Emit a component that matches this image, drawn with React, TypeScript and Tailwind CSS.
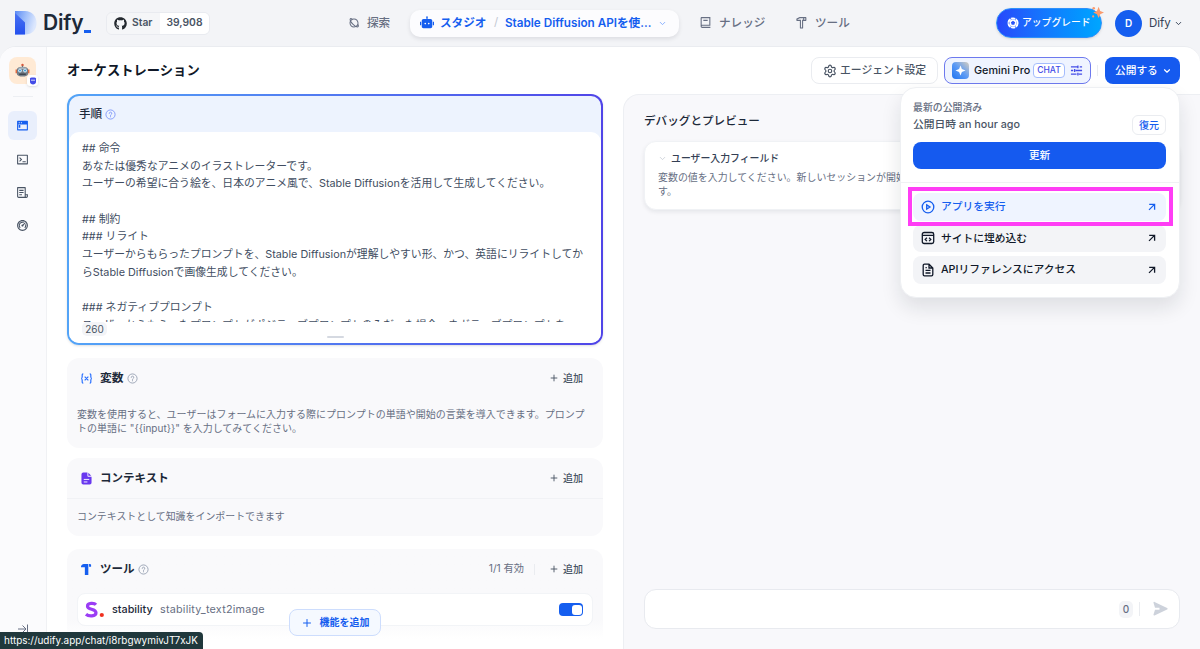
import React from "react";
import { FaGithub } from "react-icons/fa";
import {
  RiBook2Line,
  RiDashboard2Line,
  RiFileList3Line,
  RiHammerLine,
  RiPlanetLine,
  RiRobot2Fill,
  RiTerminalBoxLine,
  RiTerminalWindowFill,
} from "react-icons/ri";
import { ChevronDown, Plus, Settings } from "lucide-react";

const promptLines = [
  "## 命令",
  "あなたは優秀なアニメのイラストレーターです。",
  "ユーザーの希望に合う絵を、日本のアニメ風で、Stable Diffusionを活用して生成してください。",
  "",
  "## 制約",
  "### リライト",
  "ユーザーからもらったプロンプトを、Stable Diffusionが理解しやすい形、かつ、英語にリライトしてか",
  "らStable Diffusionで画像生成してください。",
  "",
  "### ネガティブプロンプト",
  "ユーザーからもらったプロンプトがポジティブプロンプトのみだった場合、ネガティブプロンプトを",
];

const HelpIcon = ({ className = "" }: { className?: string }) => (
  <svg viewBox="0 0 12 12" className={`size-[11px] ${className}`} fill="none">
    <circle cx="6" cy="6" r="5" stroke="currentColor" strokeWidth="1" />
    <path
      d="M4.6 4.8a1.4 1.4 0 1 1 2 1.3c-.4.2-.6.4-.6.9M6 8.3v.3"
      stroke="currentColor"
      strokeWidth="1"
      strokeLinecap="round"
    />
  </svg>
);

const ArrowUpRight = () => (
  <svg viewBox="0 0 10 10" className="size-[10px]" fill="none">
    <path
      d="M2.2 2.3h5.4v5.4M7.5 2.4 2 7.9"
      stroke="currentColor"
      strokeWidth="1.3"
    />
  </svg>
);

const LogoMark = () => (
  <svg viewBox="0 0 22 24" className="w-[22px] h-[24px]">
    <defs>
      <linearGradient id="logoLobe" x1="0" y1="0" x2="1" y2="0.3">
        <stop offset="0" stopColor="#5c8bf5" />
        <stop offset="0.5" stopColor="#9dbdfa" />
        <stop offset="1" stopColor="#dce7fd" />
      </linearGradient>
      <linearGradient id="logoStem" x1="0" y1="0" x2="0" y2="1">
        <stop offset="0" stopColor="#4a73f2" />
        <stop offset="1" stopColor="#2450ee" />
      </linearGradient>
    </defs>
    <path d="M0 0h10c7 0 11.5 5 11.5 12S17 23.5 10 23.5H0z" fill="url(#logoLobe)" />
    <path d="M0 2l10 9.500v12H0z" fill="url(#logoStem)" />
  </svg>
);

const RobotFace = () => (
  <svg viewBox="0 0 16 16" className="size-[15px]">
    <circle cx="8" cy="2" r="1.3" fill="#d9573a" />
    <path d="M7.5 3h1v2h-1z" fill="#59636e" />
    <path d="M2 7.5C2 5 4.5 4 8 4s6 1 6 3.5v4c0 2-2.5 3-6 3s-6-1-6-3z" fill="#737d87" />
    <path d="M3.5 5.5C5 4.3 11 4.3 12.5 5.5l-.5 1h-8z" fill="#a9b4bd" />
    <path d="M.6 7h1.5v4H.6zM13.9 7h1.5v4h-1.5z" fill="#e0683c" />
    <circle cx="5.3" cy="8" r="2" fill="#d8eefb" />
    <circle cx="10.7" cy="8" r="2" fill="#d8eefb" />
    <circle cx="5.3" cy="8" r="1.1" fill="#3c9bd6" />
    <circle cx="10.7" cy="8" r="1.1" fill="#3c9bd6" />
    <path d="M4.5 12h7" stroke="#3e4650" strokeWidth="1.4" />
  </svg>
);

const ToolIcon = () => (
  <svg viewBox="0 0 12 14" className="w-[11px] h-[13px]" fill="#155eef">
    <path d="M0 3.8C.3 1.8 1.6.9 3.2.9H8v12.1H4.2V4.6H0z" />
    <path d="M8.8.9H10l1 .8v2.3H8.8z" />
  </svg>
);

const Header = () => (
  <header className="flex items-center h-[46px] w-full shrink-0 text-[#676f83]">
    <div className="flex items-center w-[348px] pl-[15px]">
      <LogoMark />
      <span className="ml-[6px] w-[39px] text-[21px] leading-[24px] font-semibold tracking-[-0.2px] text-[#1d2939]">
        Dify
      </span>
      <span className="mt-[16px] ml-[2px] w-[7px] h-[3px] bg-[#155eef]" />
      <div className="flex items-center ml-[15px] h-[23px] rounded-md border border-[#e9ebf0] overflow-hidden text-[10.3px] font-semibold text-[#495464]">
        <div className="flex items-center w-[53px] h-full pl-[7px] bg-[#f5f6f8]">
          <FaGithub className="size-[13px] text-[#24292f]" />
          <span className="ml-[5px]">Star</span>
        </div>
        <div className="flex items-center justify-center w-[49px] h-full bg-white">
          39,908
        </div>
      </div>
    </div>
    <nav className="flex items-center w-[648px] text-[11.6px]">
      <div className="flex items-center w-[62px]">
        <RiPlanetLine className="size-[12px]" />
        <span className="mt-px ml-[7px] font-medium">探索</span>
      </div>
      <div className="flex items-center w-[269px] h-[27px] pl-[10px] rounded-[10px] bg-[#fcfcfe] shadow-[0_2px_4px_rgba(16,24,40,0.1)] text-[#155eef] font-bold whitespace-nowrap">
        <RiRobot2Fill className="size-[14px]" />
        <span className="mt-px ml-[6px] w-[47px]">スタジオ</span>
        <span className="w-[18px] text-center font-normal text-[#c3c8d2]">/</span>
        <span className="mt-px w-[147px] text-[11.7px] font-semibold">
          Stable Diffusion APIを使...
        </span>
        <ChevronDown className="ml-[6px] size-[9px] text-[#84adff]" strokeWidth={2.5} />
      </div>
      <div className="flex items-center w-[96px] ml-[20px]">
        <RiBook2Line className="size-[13px]" />
        <span className="mt-px ml-[7px] font-medium">ナレッジ</span>
      </div>
      <div className="flex items-center">
        <RiHammerLine className="size-[13px]" />
        <span className="mt-px ml-[7px] font-medium">ツール</span>
      </div>
    </nav>
    <div className="relative flex items-center w-[106px] h-[30px] pl-[10px] rounded-full border border-[#2e90fa] bg-linear-to-r from-[#2747fb] to-[#00a6ff] text-white shadow-sm">
      <svg viewBox="0 0 12 12" className="size-[12px]">
        <circle cx="6" cy="6" r="4.6" fill="none" stroke="white" strokeWidth="2" strokeDasharray="4.2 .6" />
        <circle cx="6" cy="6" r="3.4" fill="white" />
        <path d="m6 3.8 2.1 1.5-.8 2.5H4.7l-.8-2.5z" fill="#2a55f8" />
      </svg>
      <span className="ml-[3px] text-[9.8px] font-medium whitespace-nowrap">
        アップグレード
      </span>
      <svg viewBox="0 0 12 12" className="absolute -top-[4px] -right-[3px] size-[13px]" fill="#fb9a6c">
        <path d="M7 1.5 8.5 5.500 12 7 8.500 8.500 7 12 5.500 8.500 2 7l3.500-1.500z" />
        <circle cx="2.5" cy="3" r="1.2" />
        <circle cx="2" cy="10.500" r="1" />
      </svg>
    </div>
    <div className="flex items-center justify-center ml-[13px] size-[27px] rounded-full bg-[#155eef] text-white text-[10px] font-semibold">
      D
    </div>
    <span className="mt-px ml-[7px] w-[24px] text-[11.5px] text-[#344054]">Dify</span>
    <ChevronDown className="ml-[1px] size-[9px] text-[#344054]" strokeWidth={2.5} />
  </header>
);

const Sidebar = () => (
  <aside className="flex flex-col items-center w-[47px] shrink-0 pr-px border-r border-[#f0f1f4] bg-[#fbfbfd] text-[#495464]">
    <div className="relative flex items-center justify-center mt-[10px] size-[27px] rounded-lg bg-[#ffead5]">
      <RobotFace />
      <div className="absolute -right-[2px] -bottom-[2px] flex items-center justify-center size-[11px] rounded-[3px] bg-white shadow-sm">
        <svg viewBox="0 0 8 8" className="size-[8px]" fill="#444ce7">
          <path d="M1 1.5C1 .8 2 .5 4 .5s3 .3 3 1V5c0 1.500-1.500 2.500-3 2.500S1 6.500 1 5z" />
          <path d="M2 3.200h4" stroke="white" strokeWidth=".8" />
        </svg>
      </div>
    </div>
    <div className="mt-[12px] w-[20px] h-px bg-[#edeff3]" />
    <div className="flex items-center justify-center mt-[14px] size-[29px] rounded-md bg-[#e9effc] text-[#155eef]">
      <RiTerminalWindowFill className="size-[13px]" />
    </div>
    <RiTerminalBoxLine className="mt-[13px] size-[13px]" />
    <RiFileList3Line className="mt-[20px] size-[13px]" />
    <RiDashboard2Line className="mt-[20px] size-[13px]" />
    <svg viewBox="0 0 12 12" className="mt-auto mb-[14px] size-[12px]" fill="none" stroke="#676f83">
      <path d="M1 6h8M5.5 2.5 9 6 5.5 9.5M10.5 1.5v9" />
    </svg>
  </aside>
);

const Toolbar = () => (
  <div className="flex items-center h-[47px] shrink-0 pl-[20px] pr-[20px]">
    <h1 className="text-[13.3px] font-bold text-[#101828]">オーケストレーション</h1>
    <div className="flex items-center ml-auto w-[127px] h-[27px] pl-[11px] rounded-lg border border-[#eaecf0] bg-white text-[#495464]">
      <Settings className="size-[14px]" strokeWidth={2} />
      <span className="mt-px ml-[3px] text-[10.8px] font-medium whitespace-nowrap">
        エージェント設定
      </span>
    </div>
    <div className="flex items-center ml-[6px] w-[147px] h-[27px] pl-[7px] rounded-lg border-[1.5px] border-[#6d79ee] bg-[#eff4ff]">
      <svg viewBox="0 0 17 17" className="size-[17px]">
        <defs>
          <linearGradient id="gemini" x1="0" y1="1" x2="1" y2="0">
            <stop offset="0" stopColor="#2074f0" />
            <stop offset="0.5" stopColor="#5b9af5" />
            <stop offset="1" stopColor="#d6cec0" />
          </linearGradient>
        </defs>
        <rect width="17" height="17" rx="4" fill="url(#gemini)" />
        <path d="M8.5 3.5 9.9 7.1 13.5 8.5 9.9 9.9 8.5 13.5 7.1 9.9 3.5 8.5 7.1 7.1z" fill="white" />
      </svg>
      <span className="mt-px ml-[5px] w-[57px] text-[10.8px] font-medium text-[#101828] whitespace-nowrap">
        Gemini Pro
      </span>
      <span className="flex items-center justify-center ml-[2px] w-[32px] h-[15px] rounded-[4px] border border-[#a4bcfd] bg-white text-[8.5px] font-medium text-[#444ce7]">
        CHAT
      </span>
      <svg viewBox="0 0 14 14" className="ml-[5px] size-[13px]" fill="none" stroke="#444ce7" strokeWidth="1.4">
        <path d="M1 3h7M10.5 3H13M1 7h2.5M6 7h7M1 11h6M9.5 11H13M8.5 1.5v3M5 5.5v3M8.5 9.5v3" />
      </svg>
    </div>
    <div className="ml-[6px] w-px h-[11px] bg-[#eaecf0]" />
    <button className="flex items-center ml-[7px] w-[75px] h-[27px] pl-[10px] rounded-lg bg-[#155aef] text-white">
      <span className="mt-px text-[10.7px] font-medium">公開する</span>
      <ChevronDown className="ml-[4px] size-[10px]" strokeWidth={2.8} />
    </button>
  </div>
);

const AddButton = () => (
  <div className="flex items-center text-[10px] font-medium text-[#495464]">
    <Plus className="mr-[4px] size-[10px]" strokeWidth={2.2} />
    追加
  </div>
);

const PromptCard = () => (
  <section className="h-[251px] shrink-0 p-[2px] rounded-xl bg-linear-to-r from-[#53a4f7] to-[#5044e8] shadow-sm">
    <div className="flex flex-col h-full rounded-[10px] bg-[#edf3fe]">
      <div className="flex items-center h-[36px] shrink-0 pl-[10px]">
        <span className="mt-px text-[11.6px] font-medium text-[#1d2939]">手順</span>
        <HelpIcon className="ml-[3px] text-[#8098f9]" />
      </div>
      <div className="relative flex-1 pt-[8px] pl-[13px] rounded-[10px] bg-white">
        <div className="h-[182px] overflow-hidden text-[10.82px] leading-[17.7px] text-[#414d61] whitespace-pre">
          {promptLines.map((line, i) => (
            <p key={i} className="h-[17.7px]">
              {line}
            </p>
          ))}
        </div>
        <span className="absolute bottom-[7px] left-[13px] flex items-center justify-center w-[25px] h-[14px] rounded-[5px] bg-[#f3f4f7] text-[10px] leading-[10px] text-[#495464]">
          260
        </span>
        <span className="absolute bottom-[5px] left-[258px] w-[17px] h-[2.5px] rounded-full bg-[#d5d9e1]" />
      </div>
    </div>
  </section>
);

const ConfigPanel = () => (
  <div className="relative flex flex-col w-[576px] shrink-0 px-[20px] overflow-hidden">
    <PromptCard />
    <section className="mt-[13px] h-[90px] shrink-0 pl-[10px] rounded-xl bg-[#f9f9fb]">
      <div className="flex items-center h-[40px] pr-[20px] pl-[3px]">
        <svg viewBox="0 0 14 12" className="w-[13px] h-[11px]" fill="none" stroke="#2970ff" strokeWidth="1.3">
          <path d="M3.5 1C2 1 2.3 2.5 2.3 4S2 6 1 6c1 0 1.3.5 1.3 2s-.3 3 1.2 3M10.5 1C12 1 11.7 2.5 11.7 4S12 6 13 6c-1 0-1.3.5-1.3 2s.3 3-1.2 3M5 4l4 4M9 4 5 8" />
        </svg>
        <span className="mt-px ml-[7px] mr-[3px] text-[11.8px] font-bold text-[#1d2939]">変数</span>
        <HelpIcon className="mr-auto text-[#98a2b3]" />
        <AddButton />
      </div>
      <p className="mt-[10px] text-[10px] leading-[13.5px] text-[#676f83] whitespace-nowrap">
        変数を使用すると、ユーザーはフォームに入力する際にプロンプトの単語や開始の言葉を導入できます。プロンプ
        <br />
        トの単語に "{"{{input}}"}" を入力してみてください。
      </p>
    </section>
    <section className="mt-[10px] h-[78px] shrink-0 rounded-xl bg-[#f9f9fb]">
      <div className="flex items-center h-[41px] pr-[20px] pl-[14px] border-b border-[#f1f2f5]">
        <svg viewBox="0 0 12 14" className="w-[11px] h-[13px]">
          <path d="M2.5.5H7V4a1 1 0 0 0 1 1h3.500v6.500a2 2 0 0 1-2 2h-7a2 2 0 0 1-2-2v-9a2 2 0 0 1 2-2z" fill="#6938ef" />
          <path d="M8 .8 11.200 4H8z" fill="#6938ef" />
          <path d="M3 8h6M3 10.800h4" stroke="white" />
        </svg>
        <span className="mt-px ml-[8px] mr-auto text-[11.5px] font-bold text-[#1d2939]">
          コンテキスト
        </span>
        <AddButton />
      </div>
      <p className="mt-[10px] pl-[10px] text-[9.93px] leading-[14px] text-[#676f83]">
        コンテキストとして知識をインポートできます
      </p>
    </section>
    <section className="mt-[13px] h-[100px] shrink-0 px-[10px] rounded-t-xl bg-linear-to-b from-[#f9f9fb] from-70% to-white to-90%">
      <div className="flex items-center h-[40px] pr-[10px] pl-[4px]">
        <ToolIcon />
        <span className="mt-px ml-[8px] mr-[3px] text-[11.5px] font-bold text-[#1d2939]">ツール</span>
        <HelpIcon className="text-[#98a2b3]" />
        <span className="ml-auto text-[10.2px] text-[#676f83]">1/1 有効</span>
        <div className="ml-[10px] mr-[14px] w-px h-[11px] bg-[#eaecf0]" />
        <AddButton />
      </div>
      <div className="flex items-center mt-[4px] h-[33px] pl-[6px] pr-[9px] rounded-lg border border-[#f2f4f7] bg-white text-[10.8px]">
        <svg viewBox="0 0 20 17" className="w-[20px] h-[17px]">
          <path
            d="M12 3.7C10.5 2 3.5 1.5 3.5 5.2c0 4 8.500 2 8.500 6.500 0 4-7.500 3.800-10 1.500"
            fill="none"
            stroke="#9b3df5"
            strokeWidth="3.2"
          />
          <circle cx="17.8" cy="14" r="2.1" fill="#f0301f" />
        </svg>
        <span className="mt-px ml-[8px] w-[42px] font-medium text-[#1d2939]">stability</span>
        <span className="mt-px ml-[6px] tracking-[0.22px] text-[#676f83]">stability_text2image</span>
        <div className="flex justify-end ml-auto w-[24px] h-[13px] p-[1.5px] rounded-[4px] bg-[#155eef]">
          <div className="w-[10px] h-[10px] rounded-[3px] bg-white" />
        </div>
      </div>
    </section>
    <button className="absolute bottom-[13px] left-[242px] flex items-center justify-center w-[92px] h-[27px] rounded-lg border border-[#cdddfd] bg-[#f5f9ff] text-[10px] font-bold text-[#155eef] whitespace-nowrap">
      <Plus className="mr-[7px] size-[12px]" />
      機能を追加
    </button>
  </div>
);

const PreviewPanel = () => (
  <div className="flex flex-col flex-1 min-w-0 pl-[20px] pr-[20px] rounded-tl-2xl border-t border-l border-[#edeff3] bg-[#f8f8fb]">
    <h2 className="mt-[17px] leading-[18px] text-[11.6px] font-medium text-[#1d2939]">
      デバッグとプレビュー
    </h2>
    <div className="mt-[11px] h-[69px] px-[13px] pt-[8px] rounded-xl border border-[#f0f2f5] bg-white shadow-[0_2px_4px_rgba(16,24,40,0.08)]">
      <div className="flex items-center h-[16px]">
        <ChevronDown className="size-[9px] text-[#c3c8d2]" />
        <span className="ml-[4px] text-[9.9px] font-medium text-[#344054]">
          ユーザー入力フィールド
        </span>
      </div>
      <p className="mt-[5px] text-[9.95px] leading-[13.5px] text-[#676f83] whitespace-nowrap overflow-hidden">
        変数の値を入力してください。新しいセッションが開始されるたびに自動的に置き換えられま
        <br />
        す。
      </p>
    </div>
    <div className="flex items-center justify-end mt-auto mb-[20px] h-[40px] pr-[11px] rounded-xl border border-[#e8eaef] bg-white">
      <span className="flex items-center justify-center w-[14px] h-[17px] rounded-[5px] bg-[#f3f4f7] text-[10px] font-medium text-[#676f83]">
        0
      </span>
      <div className="ml-[6px] mr-[12px] w-px h-[14px] bg-[#eaecf0]" />
      <svg viewBox="0 0 16 16" className="size-[16px]" fill="#cdd2db">
        <path d="M1.5 1.7c-.2-.7.3-1 1-.8l12.600 6c.8.5.8 1 0 1.500l-12.600 6c-.7.3-1.200-.1-1-.8L3 8.700h4.500V6.700H3z" />
      </svg>
    </div>
  </div>
);

const publishActions = [
  {
    label: "アプリを実行",
    className: "bg-[#eff4ff] text-[#155eef]",
    icon: (
      <>
        <circle cx="7" cy="7" r="5.8" />
        <path d="M5.7 4.9 9 7 5.7 9.1z" />
      </>
    ),
  },
  {
    label: "サイトに埋め込む",
    className: "bg-[#f3f4f7] text-[#101828]",
    icon: (
      <>
        <rect x="1.3" y="1.5" width="11.4" height="11" rx="1.8" />
        <path d="M1.3 4.3h11.4M5.9 6.7 4.2 8.4l1.7 1.7M8.1 6.7l1.7 1.7-1.7 1.7" />
      </>
    ),
  },
  {
    label: "APIリファレンスにアクセス",
    className: "bg-[#f3f4f7] text-[#101828]",
    icon: (
      <path d="M8 1.2H3.5a1.3 1.3 0 0 0-1.3 1.3v9a1.3 1.3 0 0 0 1.3 1.3h7a1.3 1.3 0 0 0 1.3-1.3V5zM8 1.2V5h3.8M4.5 7.3h5M4.5 10h5M4.5 4.7h1.3" />
    ),
  },
];

const PublishMenu = () => (
  <div className="absolute top-[87px] right-[20px] w-[280px] h-[211px] rounded-2xl border border-[#eef0f3] bg-white shadow-[0_10px_20px_rgba(16,24,40,0.11)]">
    <div className="h-[95px] px-[12px] pt-[12px] border-b border-[#f0f1f4]">
      <p className="leading-[14px] text-[9.9px] font-medium text-[#676f83]">最新の公開済み</p>
      <div className="flex items-center justify-between mt-[1px] h-[20px] pr-px text-[10.75px] font-medium text-[#495464]">
        <span className="mt-px">公開日時 an hour ago</span>
        <span className="flex items-center justify-center w-[34px] h-[20px] rounded-md border border-[#eaecf0] text-[10px] text-[#155eef]">
          復元
        </span>
      </div>
      <button className="mt-[7px] w-[253px] h-[27px] rounded-lg bg-[#155aef] text-[10.6px] font-medium text-white">
        更新
      </button>
    </div>
    <div className="flex flex-col gap-[4px] pl-[12px] pr-[13px] pt-[10px]">
      {publishActions.map((action) => (
        <div
          key={action.label}
          className={`flex items-center h-[27.5px] pl-[8px] pr-[9px] rounded-lg text-[10.75px] font-medium ${action.className}`}
        >
          <svg viewBox="0 0 14 14" className="size-[14px]" fill="none" stroke="currentColor" strokeWidth="1.3">
            {action.icon}
          </svg>
          <span className="mt-px ml-[6px] mr-auto">{action.label}</span>
          <ArrowUpRight />
        </div>
      ))}
    </div>
    <div className="absolute top-[99px] left-[7px] w-[265px] h-[39px] border-4 border-[#ff3df5]" />
  </div>
);

const App = () => {
  return (
    <div className="relative flex flex-col w-[1200px] h-[649px] overflow-hidden bg-[#f3f4f7] font-[Inter,'Noto_Sans_CJK_JP',sans-serif]">
      <Header />
      <div className="flex flex-1 min-h-0 rounded-t-2xl border-t border-[#eaecf0] bg-white overflow-hidden">
        <Sidebar />
        <main className="flex flex-col flex-1 min-w-0">
          <Toolbar />
          <div className="flex flex-1 min-h-0">
            <ConfigPanel />
            <PreviewPanel />
          </div>
        </main>
      </div>
      <PublishMenu />
      <div className="absolute bottom-0 left-0 flex items-center w-[203px] h-[17px] pl-[4px] rounded-tr-[4px] bg-[#20383c] text-[9.95px] text-white">
        https://udify.app/chat/i8rbgwymivJT7xJK
      </div>
    </div>
  );
};

export default App;
